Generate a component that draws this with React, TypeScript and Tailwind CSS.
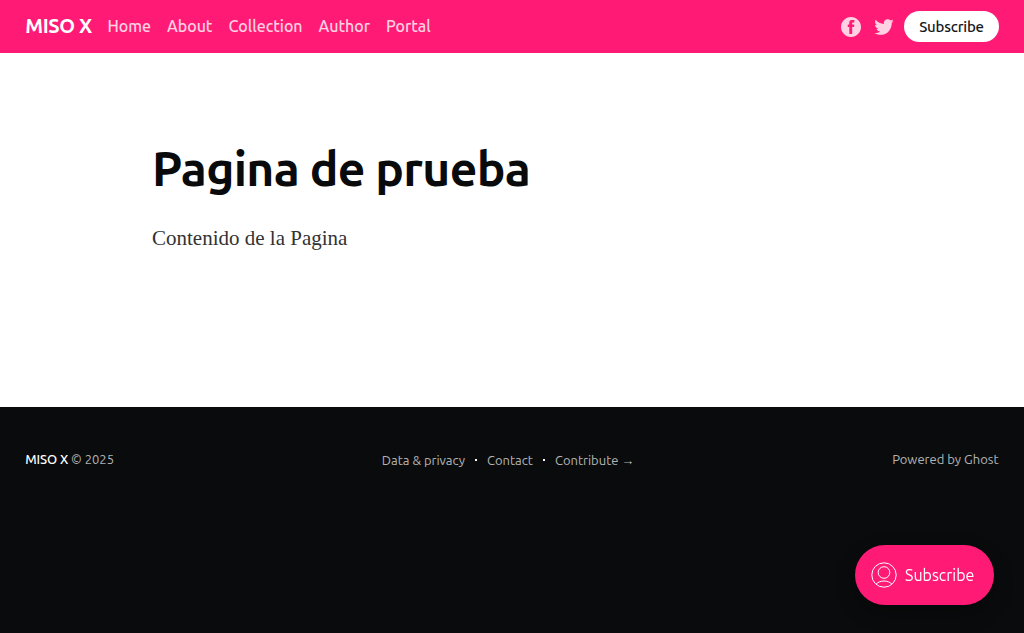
import React from "react";

const navLinks = ["Home", "About", "Collection", "Author", "Portal"];

function FacebookIcon() {
  return (
    <svg viewBox="0 0 32 32" className="h-5 w-5" fill="currentColor">
      <path d="M16 0c8.837 0 16 7.163 16 16s-7.163 16-16 16S0 24.837 0 16 7.163 0 16 0zm5.204 4.911h-3.546c-2.103 0-4.443.885-4.443 3.934.01 1.062 0 2.08 0 3.225h-2.433v3.872h2.509v11.147h4.61v-11.22h3.042l.275-3.81h-3.397s.007-1.695 0-2.187c0-1.205 1.253-1.136 1.329-1.136h2.142V4.911z" />
    </svg>
  );
}

function TwitterIcon() {
  return (
    <svg viewBox="0 0 32 32" className="h-[22px] w-[22px]" fill="currentColor">
      <path d="M30.063 7.313c-.813 1.125-1.75 2.125-2.875 2.938v.75c0 1.563-.188 3.125-.688 4.625a15.088 15.088 0 0 1-2.063 4.438c-.875 1.438-2 2.688-3.25 3.813a15.015 15.015 0 0 1-4.625 2.563c-1.813.688-3.75 1-5.75 1-3.25 0-6.188-.875-8.875-2.625.438.063.875.125 1.375.125 2.688 0 5.063-.875 7.188-2.5-1.25 0-2.375-.375-3.375-1.125s-1.688-1.688-2.063-2.875c.438.063.813.125 1.125.125.5 0 1-.063 1.5-.25-1.313-.25-2.438-.938-3.313-1.938a5.673 5.673 0 0 1-1.313-3.688v-.063c.813.438 1.688.688 2.625.688a5.228 5.228 0 0 1-1.875-2c-.5-.875-.688-1.813-.688-2.75 0-1.063.25-2.063.75-2.938 1.438 1.75 3.188 3.188 5.25 4.25s4.313 1.688 6.688 1.813a5.579 5.579 0 0 1 1.5-5.438c1.125-1.125 2.5-1.688 4.125-1.688s3.063.625 4.188 1.813a11.48 11.48 0 0 0 3.688-1.375c-.438 1.375-1.313 2.438-2.563 3.188 1.125-.125 2.188-.438 3.313-.875z" />
    </svg>
  );
}

function MemberIcon() {
  return (
    <svg viewBox="0 0 26 26" className="h-[26px] w-[26px]" fill="none" stroke="currentColor" strokeWidth="1">
      <circle cx="13" cy="13" r="12.2" />
      <circle cx="13" cy="10.5" r="5.8" />
      <path d="M5 22.2c2-2.1 4.8-3.2 8-3.2s6 1.1 8 3.2" />
    </svg>
  );
}

export default function App() {
  return (
    <div className="flex h-[633px] flex-col overflow-hidden bg-white font-['Ubuntu','Noto_Sans',sans-serif] whitespace-nowrap">
      <header className="flex h-[53px] shrink-0 items-center bg-[#ff1a75] px-[25px] text-white">
        <a className="mr-4 pb-0.5 pl-[0.3px] text-[20px] font-bold tracking-[-0.4px]">MISO X</a>
        <nav className="-ml-[0.3px] flex gap-4 pb-px text-[16px] font-medium tracking-[-0.02px]">
          {navLinks.map((link) => (
            <a key={link} className="opacity-80">{link}</a>
          ))}
        </nav>
        <div className="ml-auto flex items-center text-white/80">
          <FacebookIcon />
          <span className="ml-3 mr-[9px]"><TwitterIcon /></span>
          <button className="flex h-[31px] w-[95px] items-center justify-center rounded-full bg-white pt-px text-[15px] font-medium tracking-[-0.225px] text-[#15171a]">
            Subscribe
          </button>
        </div>
      </header>

      <main className="h-[354px] shrink-0 px-[152px] pt-[85px]">
        <h1 className="text-[48px] leading-[60px] font-bold tracking-[-0.72px] text-[#090a0b]">Pagina de prueba</h1>
        <p className="mt-[24px] font-['Liberation_Serif',serif] text-[21px] leading-[32px] text-[#333333]">Contenido de la Pagina</p>
      </main>

      <footer className="flex flex-1 items-start bg-[#0a0b0c] px-[25px] pt-[42px] text-[13px] leading-[20px] text-white/70">
        <div className="w-[356.8px] pl-[0.3px]">
          <a className="font-medium tracking-[-0.13px] text-white">MISO X</a> © 2025
        </div>
        <nav className="flex pt-px">
          <a>Data &amp; privacy</a>
          <i className="mt-[9px] mr-[10px] ml-[10px] h-[2px] w-[2px] bg-white" />
          <a>Contact</a>
          <i className="mt-[9px] mr-[10px] ml-[10px] h-[2px] w-[2px] bg-white" />
          <a>Contribute →</a>
        </nav>
        <a className="mr-[0.5px] ml-auto">Powered by Ghost</a>
      </footer>

      <button className="fixed right-[30px] bottom-[28px] flex h-[60px] w-[139px] items-center rounded-full bg-[#ff1a75] pl-4 text-[16px] text-white shadow-[0_8px_20px_rgba(0,0,0,0.3)]">
        <MemberIcon />
        <span className="ml-2">Subscribe</span>
      </button>
    </div>
  );
}
